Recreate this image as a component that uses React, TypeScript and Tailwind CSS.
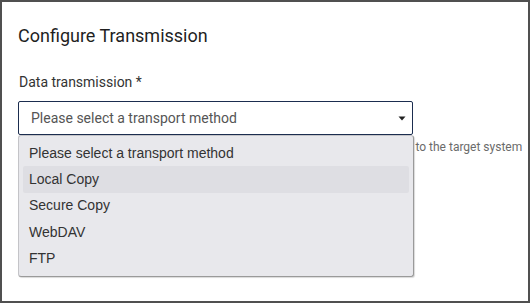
import React from "react";

const options = [
  "Please select a transport method",
  "Local Copy",
  "Secure Copy",
  "WebDAV",
  "FTP",
];

export default function App() {
  return (
    <div className="w-[530px] h-[303px] bg-white border-2 border-[#505050] overflow-hidden" style={{ fontFamily: "Roboto, 'Liberation Sans', sans-serif" }}>
      <div className="pl-4 pr-4 pt-[22px]">
        <h1 className="text-[18px] leading-6 text-[#1f1f1f] font-normal">Configure Transmission</h1>
        <div className="mt-6 text-[14px] leading-5 text-[#333333] pl-px">
          Data transmission <span className="text-[#333]">*</span>
        </div>
        <div className="relative mt-[9px] w-[395px]">
          <div className="h-[34px] border border-[#1b2d4f] rounded-[2px] flex items-center pl-3 pr-[6px] justify-between">
            <span className="text-[14px] text-[#555555]">Please select a transport method</span>
            <svg width="8" height="5" viewBox="0 0 8 5">
              <path d="M0.5 0.5 L7.5 0.5 L4 4.5 Z" fill="#222" />
            </svg>
          </div>
          <div className="mt-1 text-[12px] leading-4 text-[#6b6b6b] whitespace-nowrap">
            Choose the transport method which will be used to send the exported files to the target system
          </div>
          <div
            className="absolute left-0 top-[34px] w-[396px] bg-[#e8e8ec] border border-[#c4c4c8] border-r-[#9a9a9a] border-b-[#9a9a9a] rounded-[3px] p-1 shadow-[1px_1px_1px_rgba(0,0,0,0.15)]"
            style={{ fontFamily: "'Liberation Sans', Arial, sans-serif" }}
          >
            {options.map((o, i) => (
              <div
                key={o}
                className={`h-[26.4px] flex items-center pl-[6px] text-[14px] text-[#333] rounded-[2px] ${i === 1 ? "bg-[#dedee3] text-[#222]" : ""}`}
              >
                {o}
              </div>
            ))}
          </div>
        </div>
      </div>
    </div>
  );
}
